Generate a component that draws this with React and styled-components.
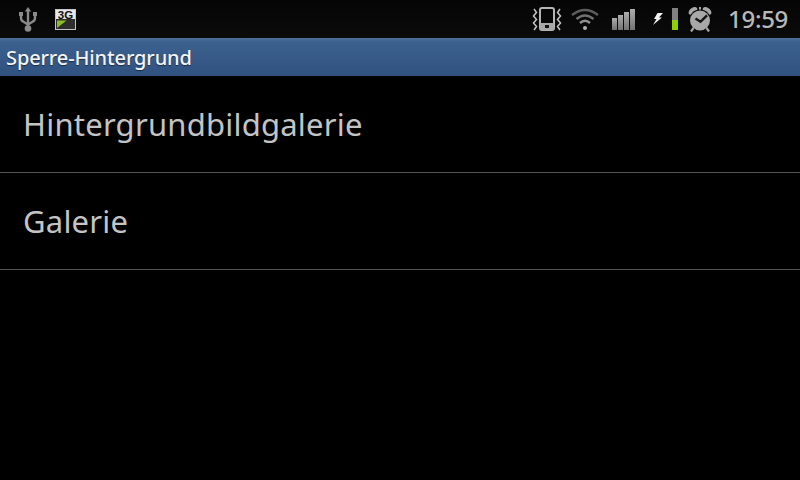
import React from 'react';
import styled, { createGlobalStyle } from 'styled-components';

const Global = createGlobalStyle`
  html, body { margin: 0; padding: 0; background: #000; }
  #root { width: 800px; height: 480px; overflow: hidden; }
`;
const Screen = styled.div`
  width: 800px; height: 480px; background: #000; display: flex; flex-direction: column;
  font-family: "Noto Sans", "Open Sans", sans-serif;
`;
const StatusBar = styled.div`
  height: 38px; flex: none; display: flex; align-items: center; justify-content: space-between;
  background: linear-gradient(#050505, #0b0b0b);
  padding: 0 12px 0 19px;
`;
const IconGroup = styled.div`display: flex; align-items: center;`;
const Slot = styled.span`
  display: flex; flex: none; margin-left: ${p => p.$left || 0}px;
`;
const Clock = styled.span`
  font-size: 24px; color: #b8b8b8; margin-left: 16px; line-height: 38px; white-space: nowrap;
  letter-spacing: -0.3px; font-weight: 500;
`;
const TitleBar = styled.div`
  height: 38px; flex: none; display: flex; align-items: center; padding-left: 6px;
  background: linear-gradient(#4d6f9c, #3d618f 10%, #2f5180);
  color: #f4f4f4; font-size: 20px; font-weight: 500; letter-spacing: -0.12px;
  text-shadow: 0 1px 1px rgba(0,0,0,.5);
`;
const Row = styled.div`
  height: 96px; flex: none; display: flex; align-items: center; padding-left: 23px;
  border-bottom: 1px solid #555;
  color: #c4c4c4; font-size: 31px; letter-spacing: 0.22px;
`;

const Usb = () => (
  <svg width="18" height="25" viewBox="0 0 18 25" fill="none" stroke="#8a8a8a" strokeWidth="2.4">
    <path d="M9 3v17M2 8v3q0 3 3 4l4 2.5 4-2.5q3-1 3-4V8" />
    <path d="M9 0l3.2 4.5H5.8zM0 5h4v4H0zM14 5h4v4h-4z" fill="#8a8a8a" stroke="none" />
    <circle cx="9" cy="21.5" r="3.3" fill="#8a8a8a" stroke="none" />
  </svg>
);
const ThreeG = () => (
  <svg width="21" height="21" viewBox="0 0 21 21">
    <rect width="21" height="21" fill="#c4c4c4" />
    <rect x="1" y="1" width="19" height="9" fill="#e8e8e8" />
    <rect x="1" y="10" width="19" height="10" fill="#2e2e2e" />
    <path d="M2 19V11.5h9.5z" fill="#8cc020" />
    <text x="10.5" y="9.6" fontSize="11.5" fontWeight="700" fontFamily="Liberation Sans" textAnchor="middle" fill="#111">3G</text>
  </svg>
);
const Vibrate = () => (
  <svg width="30" height="24" viewBox="0 0 30 24" fill="none" stroke="#b4b4b4" strokeWidth="2">
    <rect x="8" y="1" width="14" height="22" rx="2" />
    <path d="M8 16h14v6a1 1 0 0 1-1 1H9a1 1 0 0 1-1-1z" fill="#a8a8a8" stroke="none" />
    <rect x="13" y="18" width="4" height="3" fill="#111" stroke="none" />
    <path d="M2 2l2.5 3.5L1.5 9l3 3.5L1.5 16l3 3.5L2 23M28 2l-2.5 3.5 3 3.5-3 3.5 3 3.5-3 3.5L28 23" strokeWidth="1.5" stroke="#c4c4c4" />
  </svg>
);
const Wifi = () => (
  <svg width="28" height="22" viewBox="0 0 28 22" fill="none" strokeWidth="2.4">
    <path d="M1 7Q14-3 27 7" stroke="#5c5c5c" />
    <path d="M5.5 11Q14 4 22.5 11" stroke="#707070" />
    <path d="M9 15q5-4.5 10 0" stroke="#929292" />
    <circle cx="14" cy="20" r="2" fill="#b0b0b0" stroke="none" />
  </svg>
);
const Signal = () => (
  <svg width="23" height="21" viewBox="0 0 23 21">
    <defs>
      <linearGradient id="sig" x1="0" y1="0" x2="0" y2="1">
        <stop offset="0" stopColor="#acacac" /><stop offset="1" stopColor="#727272" />
      </linearGradient>
    </defs>
    <rect x="0" y="9" width="5" height="12" fill="url(#sig)" />
    <rect x="6" y="6" width="5" height="15" fill="url(#sig)" />
    <rect x="12" y="3" width="5" height="18" fill="url(#sig)" />
    <rect x="18" y="0" width="5" height="21" fill="url(#sig)" />
  </svg>
);
const Bolt = () => (
  <svg width="10" height="12" viewBox="0 0 10 12" fill="#f2f2f2"><path d="M4.5 0L1 6h2.5L0 12l9-7.5H6L10 0z" /></svg>
);
const Battery = () => (
  <svg width="6" height="22" viewBox="0 0 6 22"><rect width="6" height="12" fill="#808080" /><rect y="12" width="6" height="10" fill="#8fd000" /></svg>
);
const Alarm = () => (
  <svg width="24" height="25" viewBox="0 0 24 25">
    <ellipse cx="5" cy="4" rx="5" ry="3.2" transform="rotate(-38 5 4)" fill="#a8a8a8" />
    <ellipse cx="19" cy="4" rx="5" ry="3.2" transform="rotate(38 19 4)" fill="#a8a8a8" />
    <rect x="11" y="0" width="2" height="3" fill="#a8a8a8" />
    <circle cx="12" cy="13.5" r="11" fill="#0a0a0a" />
    <circle cx="12" cy="13.5" r="10" fill="#a8a8a8" />
    <path d="M5.5 21l-2.5 3.5M18.5 21l2.5 3.5" stroke="#a8a8a8" strokeWidth="2.2" />
    <path d="M7.5 11.5l5 3.3 6.5-6.5" stroke="#141414" strokeWidth="2.4" fill="none" />
  </svg>
);

export default function App() {
  return (
    <Screen>
      <Global />
      <StatusBar>
        <IconGroup>
          <Slot><Usb /></Slot>
          <Slot $left={18}><ThreeG /></Slot>
        </IconGroup>
        <IconGroup>
          <Slot><Vibrate /></Slot>
          <Slot $left={9}><Wifi /></Slot>
          <Slot $left={13}><Signal /></Slot>
          <Slot $left={18}><Bolt /></Slot>
          <Slot $left={9}><Battery /></Slot>
          <Slot $left={10}><Alarm /></Slot>
          <Clock>19:59</Clock>
        </IconGroup>
      </StatusBar>
      <TitleBar>Sperre-Hintergrund</TitleBar>
      <Row>Hintergrundbildgalerie</Row>
      <Row>Galerie</Row>
    </Screen>
  );
}
